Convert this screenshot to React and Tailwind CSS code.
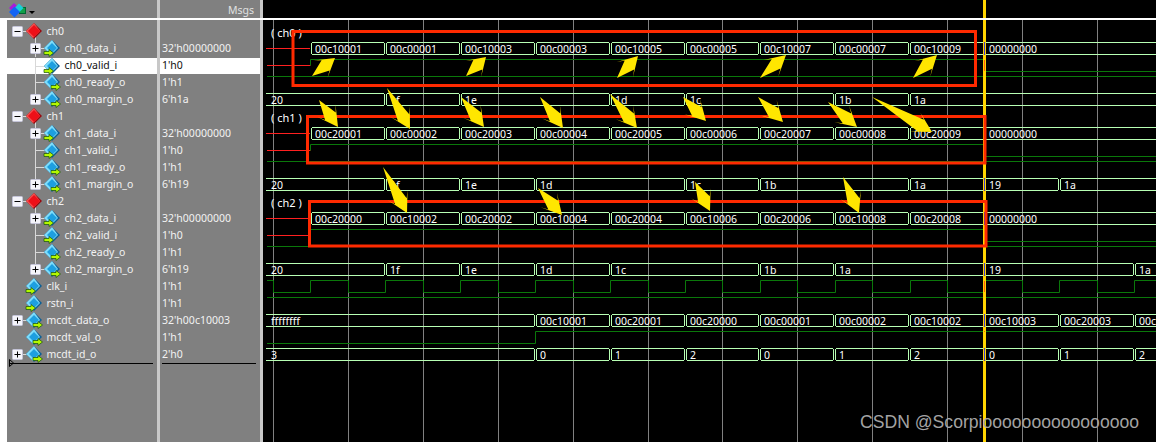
const rows = [
  { name: "ch0", kind: "group" },
  { name: "ch0_data_i", val: "32'h00000000", level: 1, box: true, dir: "in" },
  { name: "ch0_valid_i", val: "1'h0", level: 1, dir: "in", selected: true },
  { name: "ch0_ready_o", val: "1'h1", level: 1, dir: "out" },
  { name: "ch0_margin_o", val: "6'h1a", level: 1, box: true, dir: "out", last: true },
  { name: "ch1", kind: "group" },
  { name: "ch1_data_i", val: "32'h00000000", level: 1, box: true, dir: "in" },
  { name: "ch1_valid_i", val: "1'h0", level: 1, dir: "in" },
  { name: "ch1_ready_o", val: "1'h1", level: 1, dir: "out" },
  { name: "ch1_margin_o", val: "6'h19", level: 1, box: true, dir: "out", last: true },
  { name: "ch2", kind: "group" },
  { name: "ch2_data_i", val: "32'h00000000", level: 1, box: true, dir: "in" },
  { name: "ch2_valid_i", val: "1'h0", level: 1, dir: "in" },
  { name: "ch2_ready_o", val: "1'h1", level: 1, dir: "out" },
  { name: "ch2_margin_o", val: "6'h19", level: 1, box: true, dir: "out", last: true },
  { name: "clk_i", val: "1'h1", level: 0, dir: "in" },
  { name: "rstn_i", val: "1'h1", level: 0, dir: "in" },
  { name: "mcdt_data_o", val: "32'h00c10003", level: 0, box: true, dir: "out" },
  { name: "mcdt_val_o", val: "1'h1", level: 0, dir: "out" },
  { name: "mcdt_id_o", val: "2'h0", level: 0, box: true, dir: "out" },
];

const t = (k) => Math.round(310 + 74.9 * k) + 0.5;
const gridXs = Array.from({ length: 12 }, (_, k) => Math.round(273 + 74.9 * k) + 0.5);

function Box({ cx, cy, plus }) {
  return (
    <g>
      <rect x={cx - 4.5} y={cy - 4.5} width="10" height="10" rx="1" fill="#f4f4fa" stroke="#c4c4d8" />
      <rect x={cx - 2.5} y={cy} width="6" height="1" fill="#000" />
      {plus && <rect x={cx} y={cy - 2.5} width="1" height="6" fill="#000" />}
    </g>
  );
}

function RedDiamond({ cx, cy }) {
  return (
    <g>
      <polygon points={`${cx},${cy - 8} ${cx + 8},${cy} ${cx},${cy + 8} ${cx - 8},${cy}`} fill="#98080e" />
      <polygon points={`${cx},${cy - 8} ${cx - 8},${cy} ${cx - 1},${cy + 7} ${cx + 6},${cy}`} fill="#f45050" />
      <polygon points={`${cx},${cy - 6} ${cx - 6},${cy} ${cx},${cy + 6} ${cx + 6},${cy}`} fill="#ee1018" />
    </g>
  );
}

function SignalIcon({ cx, cy, dir }) {
  const ax = dir === "in" ? cx - 8 : cx - 1;
  const ay = cy + 5;
  return (
    <g>
      <polygon points={`${cx},${cy - 8} ${cx + 8},${cy} ${cx},${cy + 8} ${cx - 8},${cy}`} fill="#0a5f96" />
      <polygon points={`${cx},${cy - 8} ${cx - 8},${cy} ${cx - 1},${cy + 7} ${cx + 6},${cy}`} fill="#7edcfa" />
      <polygon points={`${cx},${cy - 5} ${cx - 5},${cy} ${cx},${cy + 5} ${cx + 5},${cy}`} fill="#1d9fe0" />
      <polygon
        points={`${ax},${ay - 1.5} ${ax + 5},${ay - 1.5} ${ax + 5},${ay - 3.5} ${ax + 9.5},${ay} ${ax + 5},${ay + 3.5} ${ax + 5},${ay + 1.5} ${ax},${ay + 1.5}`}
        fill="#b4f800"
        stroke="#14500c"
        strokeWidth="0.7"
      />
    </g>
  );
}

// connector lines, expander box and diamond of one tree row
function Gutter({ row }) {
  const isChild = row.level === 1;
  const width = isChild ? 57.5 : 39.5;
  const iconX = isChild ? 45 : 27;
  const boxX = isChild ? 28 : 10;
  const cy = 8.5;
  const line = "#d8d8d8";
  return (
    <svg width={width} height="17" className="shrink-0">
      {isChild && (
        <>
          <line x1="28.5" y1="0" x2="28.5" y2={row.last ? cy : 17} stroke={line} />
          <line x1="28" y1={cy} x2={iconX - 5} y2={cy} stroke={line} />
        </>
      )}
      {row.kind === "group" && <line x1="28.5" y1="14" x2="28.5" y2="17" stroke={line} />}
      {(row.kind === "group" || (row.box && !isChild)) && (
        <line x1="14" y1={cy} x2={iconX - 6} y2={cy} stroke={line} />
      )}
      {row.kind === "group" ? (
        <>
          <Box cx={boxX} cy={8} />
          <RedDiamond cx={iconX} cy={8} />
        </>
      ) : (
        <>
          {row.box && <Box cx={boxX} cy={8} plus />}
          <SignalIcon cx={iconX} cy={8} dir={row.dir} />
        </>
      )}
    </svg>
  );
}

function HeaderIcon() {
  return (
    <svg width="30" height="18" className="ml-[9px] shrink-0">
      <polygon points="4,3 9,8 4,13 -1,8" fill="#a81cd8" transform="translate(1 0)" />
      <rect x="10.5" y="7.5" width="6" height="6" fill="#12a048" stroke="#063" />
      <polygon points="10,3.5 14.5,8 10,12.5 5.5,8" fill="#18d0d8" />
      <polygon points="4.5,6.5 10,12 4.5,17.5 -1,12" fill="#1464f4" transform="translate(1 0)" />
      <polygon points="20,11 26,11 23,14" fill="#000" />
    </svg>
  );
}

function Seg({ a, b, top, open, label }) {
  const bot = top + 12;
  const d = open
    ? `M${a} ${top}H${b - 2}L${b - 1} ${top + 1}V${bot - 1}L${b - 2} ${bot}H${a}`
    : `M${a + 2} ${top}H${b - 2}L${b - 1} ${top + 1}V${bot - 1}L${b - 2} ${bot}H${a + 2}L${a + 1} ${bot - 1}V${top + 1}Z`;
  return (
    <g>
      <path d={d} fill="none" stroke="#b8ffb4" shapeRendering="crispEdges" />
      <text x={open ? a + 5 : a + 4.5} y={top + 10.5} className="fill-white text-[10.5px]">
        {label}
      </text>
    </g>
  );
}

function Bus({ top, labels }) {
  return (
    <g>
      {labels.map((label, i) => (
        <Seg key={i} a={t(i)} b={i + 1 < labels.length ? t(i + 1) : 1175} top={top} label={label} />
      ))}
    </g>
  );
}

// bus that starts at the left edge and only changes at some time steps
function Steps({ top, items }) {
  return (
    <g>
      {items.map(([k, label], i) => (
        <Seg
          key={i}
          a={k == null ? 266 : t(k)}
          b={items[i + 1] ? t(items[i + 1][0]) : 1175}
          top={top}
          open={k == null}
          label={label}
        />
      ))}
    </g>
  );
}

function Valid({ red, hi, lo, ready }) {
  return (
    <g>
      <path d={`M267 ${red}H310.5`} stroke="#ff2020" fill="none" />
      <path d={`M310.5 ${red}V${hi}H984.5V${lo}H1156`} stroke="#0a780a" fill="none" />
      <path d={`M267 ${ready}H1156`} stroke="#0a780a" fill="none" />
    </g>
  );
}

function Arrow({ from, to }) {
  const [x0, y0] = from;
  const [x1, y1] = to;
  const len = Math.hypot(x1 - x0, y1 - y0);
  const ux = (x1 - x0) / len;
  const uy = (y1 - y0) / len;
  const at = (d, s) => `${x0 + ux * d - uy * s},${y0 + uy * d + ux * s}`;
  const head = Math.min(20, len * 0.62);
  const neck = len - head * 0.66;
  const barb = len - head;
  const pts = [at(0, 0), at(neck, 6.5), at(barb, 11), at(len, 0), at(barb, -11), at(neck, -6.5)];
  return <polygon points={pts.join(" ")} fill="#ffe600" />;
}

const arrows = [
  [[312, 76], [335, 58]],
  [[466, 76], [486, 57]],
  [[617, 78], [638, 56]],
  [[760, 78], [786, 55]],
  [[913, 78], [937, 55]],
  [[319, 100], [338, 127]],
  [[387, 88], [410, 129]],
  [[461, 97], [484, 127]],
  [[540, 97], [563, 128]],
  [[610, 94], [637, 128]],
  [[683, 97], [706, 121]],
  [[758, 97], [783, 122]],
  [[828, 102], [857, 127]],
  [[872, 97], [932, 132]],
  [[383, 167], [407, 213]],
  [[538, 188], [562, 215]],
  [[695, 182], [710, 211]],
  [[843, 177], [859, 213]],
];

const clockPath = () => {
  let d = "M267 280.5H273.5";
  let high = false;
  for (let k = 0; k < 24; k++) {
    const x = Math.round(273 + 37.45 * k) + 0.5;
    const nx = Math.round(273 + 37.45 * (k + 1)) + 0.5;
    d += `M${x} ${high ? 292.5 : 280.5}V${high ? 280.5 : 292.5}H${nx}`;
    high = !high;
  }
  return d;
};

function Waves() {
  return (
    <svg width="893" height="422" viewBox="263 20 893 422" className="block">
      {gridXs.map((x) => (
        <line key={x} x1={x} y1="20" x2={x} y2="442" stroke="#808080" />
      ))}

      <text x="271" y="37" className="fill-white text-[11px]" xmlSpace="preserve">( ch0 )</text>
      <text x="271" y="122" className="fill-white text-[11px]" xmlSpace="preserve">( ch1 )</text>
      <text x="271" y="207" className="fill-white text-[11px]" xmlSpace="preserve">( ch2 )</text>

      <path d="M266 48.5H310M266 133.5H310M266 218.5H310" stroke="#ff2020" />
      <Bus top={42.5} labels={["00c10001", "00c00001", "00c10003", "00c00003", "00c10005", "00c00005", "00c10007", "00c00007", "00c10009", "00000000"]} />
      <Valid red={65.5} hi={59.5} lo={71.5} ready={76.5} />
      <Steps top={93.5} items={[[null, "20"], [1, "1f"], [2, "1e"], [4, "1d"], [5, "1c"], [7, "1b"], [8, "1a"]]} />

      <Bus top={127.5} labels={["00c20001", "00c00002", "00c20003", "00c00004", "00c20005", "00c00006", "00c20007", "00c00008", "00c20009", "00000000"]} />
      <Valid red={150.5} hi={144.5} lo={156.5} ready={161.5} />
      <Steps top={178.5} items={[[null, "20"], [1, "1f"], [2, "1e"], [3, "1d"], [5, "1c"], [6, "1b"], [8, "1a"], [9, "19"], [10, "1a"]]} />

      <Bus top={212.5} labels={["00c20000", "00c10002", "00c20002", "00c10004", "00c20004", "00c10006", "00c20006", "00c10008", "00c20008", "00000000"]} />
      <Valid red={235.5} hi={229.5} lo={241.5} ready={246.5} />
      <Steps top={263.5} items={[[null, "20"], [1, "1f"], [2, "1e"], [3, "1d"], [4, "1c"], [6, "1b"], [7, "1a"], [9, "19"], [11, "1a"]]} />

      <path d={clockPath()} stroke="#0a780a" fill="none" />
      <path d="M267 297.5H1156" stroke="#0a780a" />

      <Steps top={314.5} items={[[null, "ffffffff"], [3, "00c10001"], [4, "00c20001"], [5, "00c20000"], [6, "00c00001"], [7, "00c00002"], [8, "00c10002"], [9, "00c10003"], [10, "00c20003"], [11, "00c20002"]]} />
      <path d="M267 343.5H535.5V331.5H1156" stroke="#0a780a" fill="none" />
      <Steps top={348.5} items={[[null, "3"], [3, "0"], [4, "1"], [5, "2"], [6, "0"], [7, "1"], [8, "2"], [9, "0"], [10, "1"], [11, "2"]]} />

      <rect x="983" y="20" width="3" height="422" fill="#ffd400" />
      <path d="M984.5 42V55M984.5 127V140M984.5 178V191M984.5 212V225M984.5 263V276M984.5 314V327M984.5 348V361" stroke="#3c3cd0" />
      <path d="M984.5 60V71M984.5 281V292M984.5 331V332" stroke="#ff5a10" />

      <rect x="293" y="31.5" width="682.5" height="54" fill="none" stroke="#ff2a00" strokeWidth="3" />
      <rect x="307.5" y="116.5" width="677.5" height="46.5" fill="none" stroke="#ff2a00" strokeWidth="3" />
      <rect x="309.5" y="201.5" width="676.5" height="44.5" fill="none" stroke="#ff2a00" strokeWidth="3" />

      {arrows.map(([from, to], i) => (
        <Arrow key={i} from={from} to={to} />
      ))}

      <text x="860" y="428" className="fill-[#a3a3a3] text-[17.6px] font-['Liberation_Sans',sans-serif]">
        CSDN @Scorpioooooooooooooooo
      </text>
    </svg>
  );
}

export default function App() {
  return (
    <div className="flex h-[442px] w-[1156px] overflow-hidden bg-white font-['Noto_Sans',sans-serif] text-[10.5px] text-[#f2f2f2]">
      <div className="flex w-[263px] shrink-0 flex-col">
        <div className="flex h-[18px] bg-[#808080]">
          <div className="flex w-[157px] items-center">
            <HeaderIcon />
          </div>
          <div className="w-[3px] bg-[#c8c8c8]" />
          <div className="w-[100px] pr-1.5 text-right leading-[20px] text-[#e0e0e0]">Msgs</div>
          <div className="w-[3px] bg-[#c8c8c8]" />
        </div>
        <div className="h-[2px] bg-white" />
        <div className="flex flex-1">
          <div className="w-[7px] bg-white" />
          <div className="relative w-[150px] bg-[#808080] pt-[3px]">
            {rows.map((row) => (
              <div
                key={row.name}
                className={
                  row.selected
                    ? "flex h-[17px] items-center border-t border-[#808080] bg-white text-[#101010]"
                    : "flex h-[17px] items-center"
                }
              >
                <Gutter row={row} />
                <span className="whitespace-nowrap">{row.name}</span>
              </div>
            ))}
            <div className="ml-[3px] mr-1 h-px bg-black" />
            <svg width="6" height="8" className="absolute left-[2px] top-[339px]">
              <polygon points="0.5,0.5 4.5,4 0.5,7.5" fill="none" stroke="#000" />
            </svg>
          </div>
          <div className="w-[3px] bg-[#c8c8c8]" />
          <div className="w-[100px] bg-[#808080] pt-[3px]">
            {rows.map((row) => (
              <div
                key={row.name}
                className={
                  row.selected
                    ? "flex h-[17px] items-center border-t border-[#808080] bg-white pl-0.5 text-[#101010]"
                    : "flex h-[17px] items-center pl-0.5"
                }
              >
                {row.val}
              </div>
            ))}
            <div className="ml-0.5 mr-1 h-px bg-black" />
          </div>
          <div className="w-[3px] bg-[#c8c8c8]" />
        </div>
      </div>
      <div className="flex flex-1 flex-col bg-black">
        <div className="h-[18px]">
          <div className="ml-[720px] h-full w-[3px] bg-[#ffd400]" />
        </div>
        <div className="h-[2px] bg-white" />
        <Waves />
      </div>
    </div>
  );
}
